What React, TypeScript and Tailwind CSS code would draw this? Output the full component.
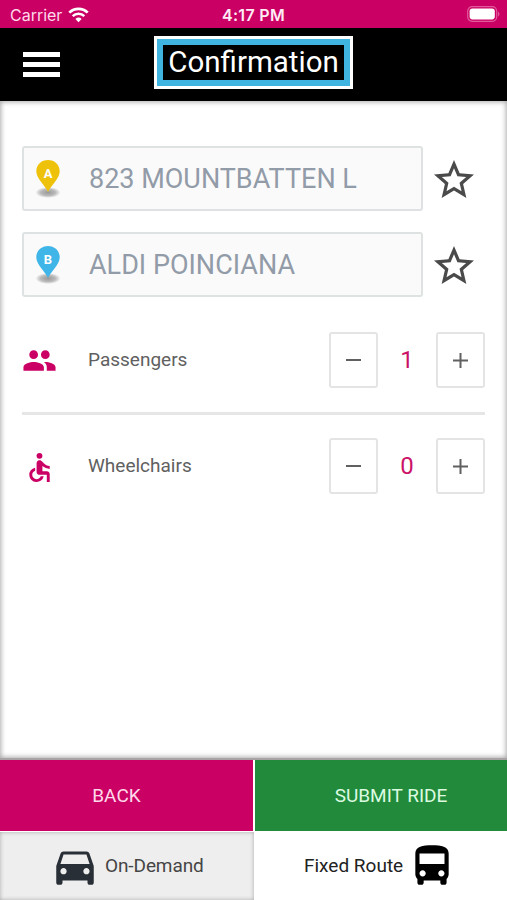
import React, { useState } from 'react';
import {
  MdAccessible,
  MdDirectionsBus,
  MdDirectionsCar,
  MdPeople,
  MdStarOutline,
} from 'react-icons/md';

interface AddressFieldProps {
  letter: string;
  color: string;
  value: string;
}

interface CounterProps {
  value: number;
  onChange: (value: number) => void;
}

const StatusBar: React.FC = () => (
  <div className="grid h-[28px] grid-cols-3 items-center bg-[#cb0064] pt-[2px] pl-[10px] pr-[7px] text-white">
    <div className="flex items-center gap-[6px]">
      <span className="font-['Inter',sans-serif] text-[16px] leading-[20px] tracking-[-0.02px] text-[#ffd9ea]">Carrier</span>
      <svg className="h-[16px] w-[21px]" viewBox="0 0 21 16" fill="none" stroke="white">
        <path d="M1.3 5.6a13.2 13.2 0 0 1 18.4 0" strokeWidth="2.7" />
        <path d="M4.7 9.1a8.3 8.3 0 0 1 11.6 0" strokeWidth="2.5" />
        <path d="M10.5 15.2 7.4 12a4.5 4.5 0 0 1 6.2 0z" fill="white" stroke="none" />
      </svg>
    </div>
    <span className="-ml-[3px] text-center font-['Inter',sans-serif] text-[16px] font-semibold leading-[20px] tracking-[0.3px] text-[#ffecf5]">4:17 PM</span>
    <svg className="-mt-[2px] h-[16px] w-[33px] justify-self-end" viewBox="0 0 33 16" fill="none">
      <rect x="0.7" y="0.7" width="29" height="14.6" rx="4.5" stroke="#e05a9a" strokeWidth="1.2" />
      <rect x="2.6" y="2.6" width="25.2" height="10.8" rx="2.8" fill="white" />
      <path d="M31 5.5c1.8.8 1.8 4.2 0 5z" fill="#e05a9a" />
    </svg>
  </div>
);

const AddressField: React.FC<AddressFieldProps> = ({ letter, color, value }) => (
  <div className="flex h-[65px] items-center">
    <div className="flex h-full w-[401px] items-center rounded-[3px] border-2 border-[#dfe2e3] bg-[#fafafa] pl-[11px]">
      <svg className="mt-[1px] h-[44px] w-[26px] shrink-0" viewBox="0 0 26 44">
        <defs>
          <radialGradient id={`shadow-${letter}`}>
            <stop offset="0" stopColor="#999" />
            <stop offset="0.6" stopColor="#bbb" />
            <stop offset="1" stopColor="#fafafa" />
          </radialGradient>
        </defs>
        <ellipse cx="13" cy="35.5" rx="12.5" ry="5.5" fill={`url(#shadow-${letter})`} />
        <path
          d="M13 3C6.4 3 1.3 7.8 1.3 14.2c0 4 2.2 7.1 5 11.1 2.3 3.2 4.6 5.3 6.7 9.7 2.1-4.4 4.4-6.5 6.7-9.7 2.8-4 5-7.1 5-11.1C24.7 7.8 19.6 3 13 3z"
          fill={color}
        />
        <text x="13" y="20.5" textAnchor="middle" fill="white" className="font-['Roboto',sans-serif] text-[13px] font-bold">{letter}</text>
      </svg>
      <span className="ml-[28px] mt-[1px] whitespace-nowrap text-[27px] leading-[34px] text-[#929ba8]">{value}</span>
    </div>
    <MdStarOutline className="ml-[7px] mt-[2px] h-[48px] w-[48px] shrink-0 text-[#4a4a4a]" />
  </div>
);

const Counter: React.FC<CounterProps> = ({ value, onChange }) => (
  <div className="flex items-center">
    <button
      aria-label="Decrease"
      className="flex h-[56px] w-[49px] items-center justify-center rounded-[3px] border-2 border-[#e4e4e4]"
      onClick={() => onChange(Math.max(0, value - 1))}
    >
      <span className="h-[2px] w-[15px] bg-[#606060]" />
    </button>
    <span className="w-[58px] pb-[1px] text-center text-[24px] leading-[30px] text-[#cb1268]">{value}</span>
    <button
      aria-label="Increase"
      className="flex h-[56px] w-[49px] items-center justify-center rounded-[3px] border-2 border-[#e4e4e4]"
      onClick={() => onChange(value + 1)}
    >
      <svg className="h-[15px] w-[15px]" viewBox="0 0 15 15" stroke="#606060" strokeWidth="2">
        <path d="M0 7.5h15M7.5 0v15" />
      </svg>
    </button>
  </div>
);

const App: React.FC = () => {
  const [passengers, setPassengers] = useState(1);
  const [wheelchairs, setWheelchairs] = useState(0);

  return (
    <div className="flex h-[900px] w-[507px] flex-col overflow-hidden bg-white font-['Roboto',sans-serif]">
      <StatusBar />

      {/* Header */}
      <header className="grid h-[73px] grid-cols-[154px_199px_1fr] items-center bg-black">
        <button aria-label="Menu" className="ml-[23px] flex w-[37px] flex-col gap-[5px]">
          <span className="h-[5px] bg-white" />
          <span className="h-[5px] bg-white" />
          <span className="h-[5px] bg-white" />
        </button>
        <div className="-mt-[5px] h-[53px] border-[3px] border-white">
          <h1 className="flex h-full items-center justify-center border-[6px] border-[#40b4e1] text-[29.5px] leading-[38px] text-white">
            Confirmation
          </h1>
        </div>
      </header>

      {/* Ride details */}
      <main className="h-[657px] pl-[22px] pr-[22px] pt-[45px] shadow-[inset_0_0_5px_1px_#aaa]">
        <div className="flex flex-col gap-[21px]">
          <AddressField letter="A" color="#eec20b" value="823 MOUNTBATTEN L" />
          <AddressField letter="B" color="#3fb5e8" value="ALDI POINCIANA" />
        </div>

        <div className="mt-[35px] flex h-[56px] items-center">
          <MdPeople className="h-[35px] w-[35px] text-[#cb0064]" />
          <span className="ml-[31px] flex-1 pb-[1px] text-[19px] leading-[24px] text-[#606060]">Passengers</span>
          <Counter value={passengers} onChange={setPassengers} />
        </div>
        <div className="mt-[24px] h-[3px] w-[463px] bg-[#e6e6e6]" />
        <div className="mt-[23px] flex h-[56px] items-center">
          <MdAccessible className="mt-[2px] h-[35px] w-[35px] text-[#cb0064]" />
          <span className="ml-[31px] flex-1 pb-[1px] text-[19px] leading-[24px] text-[#606060]">Wheelchairs</span>
          <Counter value={wheelchairs} onChange={setWheelchairs} />
        </div>
      </main>

      {/* Actions */}
      <div className="flex h-[73px] gap-[2px] border-t-2 border-[#a9a2a5]">
        <button className="w-[253px] bg-[#cb0064] pr-[20px] pt-[2px] text-[19px] text-[#ffd9ea]">BACK</button>
        <button className="flex-1 bg-[#228b3b] pl-[20px] pt-[2px] text-[19px] text-[#dcfbe1]">SUBMIT RIDE</button>
      </div>

      {/* Service tabs */}
      <nav className="flex h-[69px] pt-[1px]">
        <button className="flex w-[254px] items-center bg-[#eee] pl-[50px] text-[19px] tracking-[-0.1px] text-[#454545] shadow-[inset_0_0_4px_0px_#aaa]">
          <MdDirectionsCar className="h-[50px] w-[50px] text-[#292f36]" />
          <span className="ml-[5px] pt-[1px]">On-Demand</span>
        </button>
        <button className="flex flex-1 items-center pl-[50px] text-[19px] text-[#222]">
          <span className="pt-[1px]">Fixed Route</span>
          <MdDirectionsBus className="ml-[4px] h-[50px] w-[50px] text-black" />
        </button>
      </nav>
    </div>
  );
};

export default App;
